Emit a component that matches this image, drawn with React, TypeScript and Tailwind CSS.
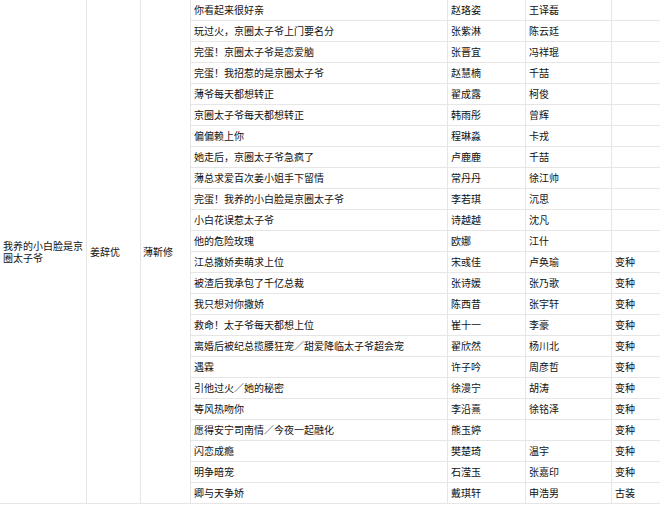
import React from 'react';

type Row = { title: string; actress: string; actor: string; tag?: string };

const rows: Row[] = [
  { title: '你看起来很好亲', actress: '赵珞姿', actor: '王译磊' },
  { title: '玩过火，京圈太子爷上门要名分', actress: '张紫淋', actor: '陈云廷' },
  { title: '完蛋！京圈太子爷是恋爱脑', actress: '张晋宜', actor: '冯祥琨' },
  { title: '完蛋！我招惹的是京圈太子爷', actress: '赵慧楠', actor: '千喆' },
  { title: '薄爷每天都想转正', actress: '翟成露', actor: '柯俊' },
  { title: '京圈太子爷每天都想转正', actress: '韩雨彤', actor: '曾辉' },
  { title: '偏偏赖上你', actress: '程琳淼', actor: '卡戎' },
  { title: '她走后，京圈太子爷急疯了', actress: '卢鹿鹿', actor: '千喆' },
  { title: '薄总求爱百次姜小姐手下留情', actress: '常丹丹', actor: '徐江帅' },
  { title: '完蛋！我养的小白脸是京圈太子爷', actress: '李若琪', actor: '沉思' },
  { title: '小白花误惹太子爷', actress: '诗越越', actor: '沈凡' },
  { title: '他的危险玫瑰', actress: '欧娜', actor: '江什' },
  { title: '江总撒娇卖萌求上位', actress: '宋彧佳', actor: '卢奂瑜', tag: '变种' },
  { title: '被渣后我承包了千亿总裁', actress: '张诗媛', actor: '张乃歌', tag: '变种' },
  { title: '我只想对你撒娇', actress: '陈西昔', actor: '张宇轩', tag: '变种' },
  { title: '救命！太子爷每天都想上位', actress: '崔十一', actor: '李豪', tag: '变种' },
  { title: '离婚后被纪总揽腰狂宠／甜爱降临太子爷超会宠', actress: '翟欣然', actor: '杨川北', tag: '变种' },
  { title: '遇霖', actress: '许子吟', actor: '周彦哲', tag: '变种' },
  { title: '引他过火／她的秘密', actress: '徐漫宁', actor: '胡涛', tag: '变种' },
  { title: '等风热吻你', actress: '李沿熹', actor: '徐铭泽', tag: '变种' },
  { title: '愿得安宁司南情／今夜一起融化', actress: '熊玉婷', actor: '', tag: '变种' },
  { title: '闪恋成瘾', actress: '樊楚琦', actor: '温宇', tag: '变种' },
  { title: '明争暗宠', actress: '石滢玉', actor: '张嘉印', tag: '变种' },
  { title: '卿与天争娇', actress: '戴琪轩', actor: '申浩男', tag: '古装' },
];

const cell = 'border border-[#e6e6e6] px-[3px] py-0 align-middle whitespace-nowrap overflow-hidden';

export default function App() {
  return (
    <div
      className="w-[660px] h-[507px] overflow-hidden bg-white text-[10px] leading-[12px] text-[#111111]"
      style={{ fontFamily: '"Noto Sans CJK SC", "Noto Sans", sans-serif' }}
    >
      <table className="table-fixed border-collapse w-[700px] mt-[-1px] ml-[-1px]">
        <colgroup>
          <col className="w-[87px]" />
          <col className="w-[54px]" />
          <col className="w-[50px]" />
          <col className="w-[257px]" />
          <col className="w-[78px]" />
          <col className="w-[86px]" />
          <col className="w-[88px]" />
        </colgroup>
        <tbody>
          {rows.map((r, i) => (
            <tr key={i} className="h-[21px]">
              {i === 0 && (
                <>
                  <td rowSpan={rows.length} className="border border-[#e6e6e6] px-[3px] align-middle whitespace-normal leading-[12px]">
                    我养的小白脸是京圈太子爷
                  </td>
                  <td rowSpan={rows.length} className="border border-[#e6e6e6] px-[3px] align-middle">
                    姜辞优
                  </td>
                  <td rowSpan={rows.length} className="border border-[#e6e6e6] px-[2px] align-middle">
                    薄靳修
                  </td>
                </>
              )}
              <td className={cell}>{r.title}</td>
              <td className={cell}>{r.actress}</td>
              <td className={cell}>{r.actor}</td>
              <td className={cell}>{r.tag ?? ''}</td>
            </tr>
          ))}
        </tbody>
      </table>
    </div>
  );
}
